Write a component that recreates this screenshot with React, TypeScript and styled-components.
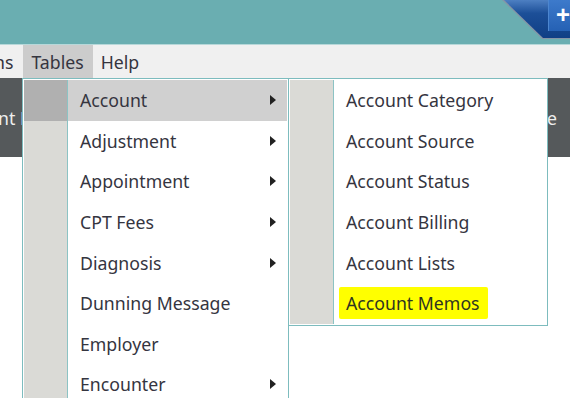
import React from 'react'
import styled, { createGlobalStyle } from 'styled-components'

const GlobalStyle = createGlobalStyle`
  html, body {
    margin: 0;
    padding: 0;
    background: #ffffff;
    overflow: hidden;
  }
  body {
    font-family: 'Segoe UI', 'Noto Sans', 'Open Sans', sans-serif;
  }
`

const uiFont = `'Segoe UI', 'Noto Sans', 'Open Sans', sans-serif`
const teal = '#6aaeb1'
const menuBorder = '#7dbcbe'
const textColor = '#35353f'

const Page = styled.div`
  width: 570px;
  height: 398px;
  display: flex;
  flex-direction: column;
  overflow: hidden;
  background: #ffffff;
`

const TitleBar = styled.div`
  height: 44px;
  flex: none;
  background: ${teal};
  border-bottom: 1px solid #b7d8d9;
  display: flex;
  justify-content: flex-end;
`

const NewTab = styled.div`
  width: 68px;
  height: 39px;
  background: #8595a6;
  clip-path: polygon(0 0, 100% 0, 100% 100%, 40px 100%);
  box-sizing: border-box;
  padding-bottom: 1px;
`

const TabFace = styled.div`
  margin-left: 2px;
  height: 38px;
  display: flex;
  justify-content: flex-end;
  background: linear-gradient(#4d7fc2 0%, #1c4f98 35%, #103f85 100%);
  clip-path: polygon(0 0, 100% 0, 100% 100%, 39px 100%);
`

const PlusBox = styled.div`
  width: 22px;
  height: 31px;
  box-sizing: border-box;
  background: linear-gradient(#3d7acb, #2561b4);
  border-left: 1px solid #4c86cf;
  color: #ffffff;
  font-family: 'Liberation Sans', sans-serif;
  font-weight: bold;
  font-size: 24px;
  line-height: 30px;
  padding-left: 7px;
  overflow: hidden;
`

const MenuBar = styled.div`
  height: 33px;
  flex: none;
  background: #f0f0f0;
  display: flex;
  font-family: ${uiFont};
  font-size: 17.7px;
  color: ${textColor};
`

const MenuItem = styled.div<{ $open?: boolean; $first?: boolean }>`
  display: flex;
  align-items: center;
  margin-left: ${p => (p.$first ? '-6px' : '0')};
  padding: 0 ${p => (p.$first ? '10px' : '9px')} 0 ${p => (p.$first ? '0' : '8px')};
  background: ${p => (p.$open ? '#cccccc' : 'transparent')};
`

const Workspace = styled.div`
  position: relative;
  flex: 1;
`

const ToolStrip = styled.div`
  height: 79px;
  background: #55595b;
  display: flex;
  justify-content: space-between;
  align-items: center;
  font-family: ${uiFont};
  font-size: 17.7px;
  color: #eeeeee;
`

const StripLabel = styled.span<{ $right?: boolean }>`
  margin: ${p => (p.$right ? '0 13px 0 0' : '0 0 0 -2px')};
`

const Dropdown = styled.div<{ $left: number; $width: number }>`
  position: absolute;
  top: 0;
  left: ${p => p.$left}px;
  width: ${p => p.$width}px;
  box-sizing: border-box;
  border: 1px solid ${menuBorder};
  padding: 1px;
  background: #ffffff;
  font-family: ${uiFont};
  font-size: 17.7px;
  color: ${textColor};
`

const Row = styled.div<{ $active?: boolean }>`
  height: 40.6px;
  display: flex;
  align-items: stretch;
  background: ${p => (p.$active ? '#d0d0d0' : '#ffffff')};
`

const Gutter = styled.div<{ $active?: boolean }>`
  width: 43px;
  flex: none;
  background: ${p => (p.$active ? '#b0b0b0' : '#dadad6')};
  border-right: 1px solid #8cc3c4;
`

const Label = styled.div`
  flex: 1;
  display: flex;
  align-items: center;
  padding-left: 12px;
  white-space: nowrap;
`

const Arrow = styled.span`
  width: 0;
  height: 0;
  align-self: center;
  margin-right: 11px;
  border-left: 6px solid #222222;
  border-top: 5px solid transparent;
  border-bottom: 5px solid transparent;
`

const Marker = styled.span`
  background: #ffff00;
  margin-left: -7px;
  padding: 4px 8px 4px 7px;
  border-radius: 2px;
  color: #2f3520;
`

const tables = [
  { name: 'Account', sub: true },
  { name: 'Adjustment', sub: true },
  { name: 'Appointment', sub: true },
  { name: 'CPT Fees', sub: true },
  { name: 'Diagnosis', sub: true },
  { name: 'Dunning Message', sub: false },
  { name: 'Employer', sub: false },
  { name: 'Encounter', sub: true },
]

const accountItems = [
  'Account Category',
  'Account Source',
  'Account Status',
  'Account Billing',
  'Account Lists',
  'Account Memos',
]

export default function App() {
  return <>
    <GlobalStyle />
    <Page>
      <TitleBar>
        <NewTab>
          <TabFace>
            <PlusBox>+</PlusBox>
          </TabFace>
        </NewTab>
      </TitleBar>
      <MenuBar>
        <MenuItem $first>ns</MenuItem>
        <MenuItem $open>Tables</MenuItem>
        <MenuItem>Help</MenuItem>
      </MenuBar>
      <Workspace>
        <ToolStrip>
          <StripLabel>nt H</StripLabel>
          <StripLabel $right>e</StripLabel>
        </ToolStrip>

        <Dropdown $left={22} $width={267}>
          {tables.map((t, i) => (
            <Row key={t.name} $active={i === 0}>
              <Gutter $active={i === 0} />
              <Label>{t.name}</Label>
              {t.sub && <Arrow />}
            </Row>
          ))}
        </Dropdown>

        <Dropdown $left={288} $width={260}>
          {accountItems.map(name => (
            <Row key={name}>
              <Gutter />
              <Label>
                {name === 'Account Memos' ? <Marker>{name}</Marker> : name}
              </Label>
            </Row>
          ))}
        </Dropdown>
      </Workspace>
    </Page>
  </>
}
